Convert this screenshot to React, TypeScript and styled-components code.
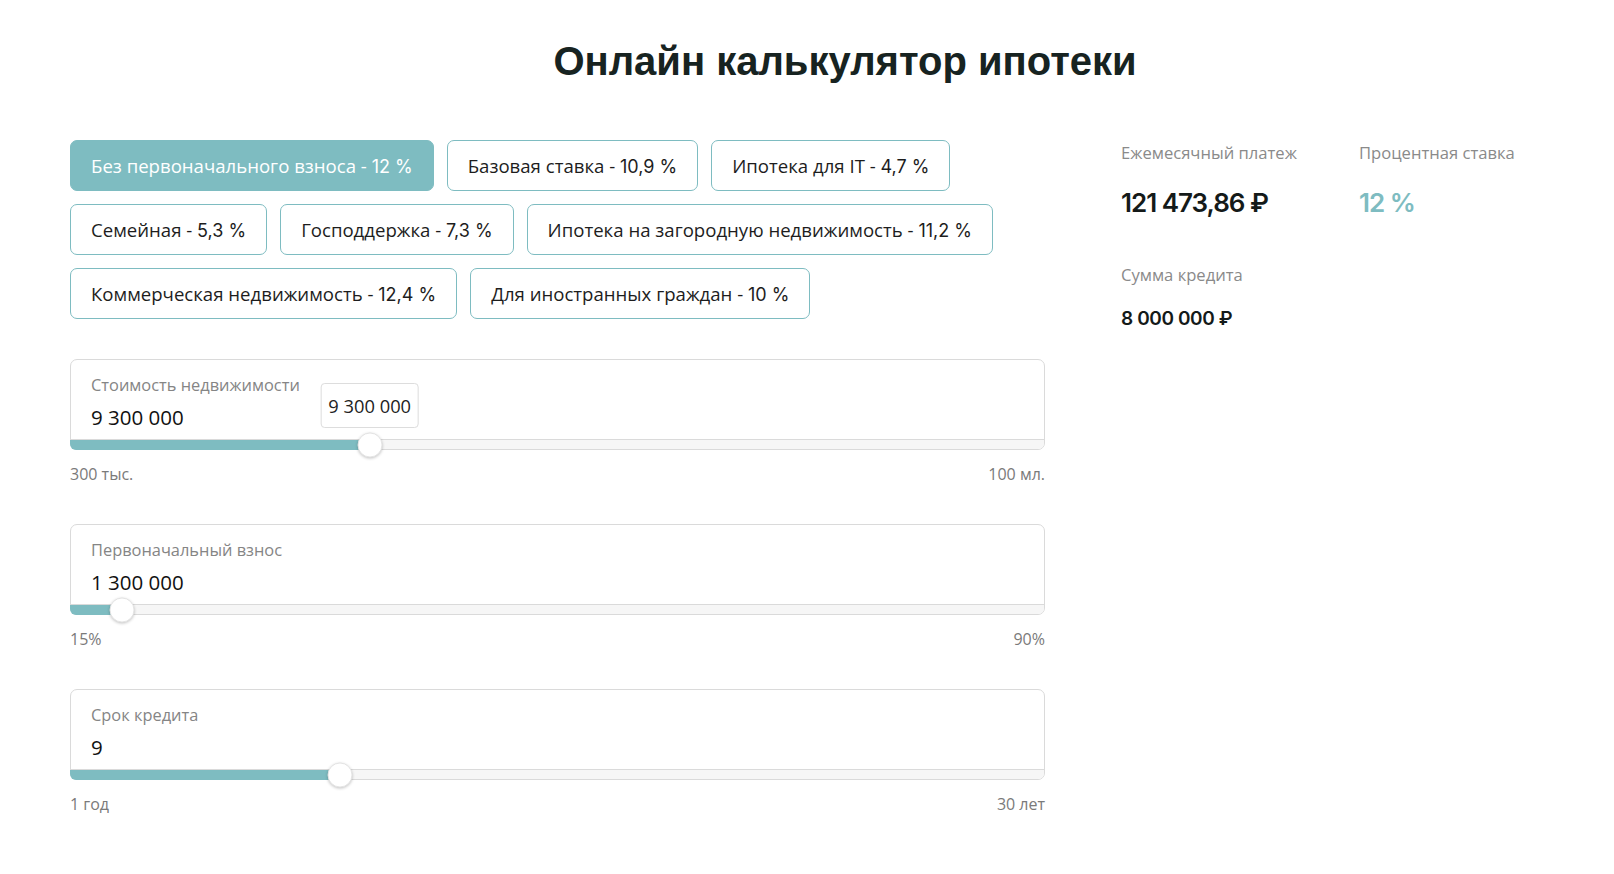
import React from "react";
import styled, { createGlobalStyle } from "styled-components";

const TEAL = "#7ebcc1";

const GlobalStyle = createGlobalStyle`
  html, body { margin: 0; padding: 0; background: #ffffff; }
  body { font-family: "Open Sans", "Noto Sans", sans-serif; color: #1b1b1b; }
  * { box-sizing: border-box; }
`;

const Page = styled.div`
  width: 1614px;
  height: 874px;
  padding: 41px 0 0 70px;
  overflow: hidden;
`;

const Title = styled.h1`
  margin: 0 0 59px;
  padding-left: 6px;
  text-align: center;
  font: 700 40px/1 "Liberation Sans", Arial, sans-serif;
  color: #172321;
`;

const Main = styled.div`
  display: flex;
  align-items: flex-start;
  gap: 76px;
`;

const LeftColumn = styled.div`
  width: 975px;
  display: flex;
  flex-direction: column;
`;

const Programs = styled.div`
  display: flex;
  flex-wrap: wrap;
  gap: 13px 13px;
`;

const ProgramButton = styled.button<{ $active?: boolean }>`
  height: 51px;
  padding: 0 20px;
  border: 1px solid ${TEAL};
  border-radius: 7px;
  background: ${(p) => (p.$active ? TEAL : "#ffffff")};
  color: ${(p) => (p.$active ? "#ffffff" : "#1d1d1d")};
  font-family: "Open Sans", "Noto Sans", sans-serif;
  font-size: 18.6px;
  cursor: pointer;
  white-space: nowrap;
`;

const Rate = styled.span`
  font-family: Inter, "Open Sans", sans-serif;
  font-size: 18px;
`;

const Sliders = styled.div`
  margin-top: 40px;
  display: flex;
  flex-direction: column;
  gap: 39px;
`;

const SliderBlock = styled.div`
  display: flex;
  flex-direction: column;
`;

const Card = styled.div`
  position: relative;
  height: 91px;
  border: 1px solid #dadada;
  border-radius: 7px;
  display: flex;
  flex-direction: column;
`;

const CardBody = styled.div`
  padding: 14px 20px 0;
  flex: 1;
`;

const FieldLabel = styled.div`
  font-size: 16.4px;
  line-height: 22px;
  color: #858585;
`;

const FieldValue = styled.div`
  margin-top: 7px;
  font-size: 20.5px;
  line-height: 28px;
  color: #111111;
`;

const Track = styled.div`
  position: relative;
  height: 10px;
  border-top: 1px solid #dadada;
  background: #f6f6f6;
  border-radius: 0 0 6px 6px;
`;

const Fill = styled.div`
  position: absolute;
  left: -1px;
  top: 0;
  bottom: -1px;
  background: ${TEAL};
  border-radius: 0 0 0 6px;
`;

const Thumb = styled.div`
  position: absolute;
  top: 50%;
  width: 25px;
  height: 25px;
  border-radius: 50%;
  background: #ffffff;
  border: 1px solid #e4e4e4;
  box-shadow: 0 1px 3px rgba(0, 0, 0, 0.22);
  transform: translate(-50%, -50%);
`;

const Tooltip = styled.div`
  position: absolute;
  bottom: calc(100% + 12px);
  height: 45px;
  padding: 0 7px;
  border: 1px solid #dddddd;
  border-radius: 4px;
  background: #ffffff;
  font-size: 18.3px;
  line-height: 43px;
  color: #222222;
  white-space: nowrap;
  transform: translateX(-50%);
`;

const RangeRow = styled.div`
  margin-top: 13px;
  display: flex;
  justify-content: space-between;
  font-size: 16px;
  line-height: 22px;
  color: #7a7a7a;
`;

const Summary = styled.div`
  padding-top: 2px;
  display: grid;
  grid-template-columns: 238px 238px;
  row-gap: 44px;
`;

const Stat = styled.div`
  display: flex;
  flex-direction: column;
`;

const StatLabel = styled.div`
  font-size: 16.6px;
  line-height: 22px;
  color: #8a8a8a;
  white-space: nowrap;
`;

const StatValue = styled.div<{ $accent?: boolean; $small?: boolean }>`
  margin-top: ${(p) => (p.$small ? "20px" : "22px")};
  font-family: Inter, "Open Sans", sans-serif;
  font-weight: 600;
  font-size: ${(p) => (p.$small ? "19px" : "26px")};
  letter-spacing: ${(p) => (p.$small ? "-0.4px" : "-1px")};
  line-height: ${(p) => (p.$small ? "26px" : "34px")};
  color: ${(p) => (p.$accent ? TEAL : "#141a19")};
  white-space: nowrap;
`;

const programs = [
  { name: "Без первоначального взноса", rate: "12 %", active: true },
  { name: "Базовая ставка", rate: "10,9 %" },
  { name: "Ипотека для IT", rate: "4,7 %" },
  { name: "Семейная", rate: "5,3 %" },
  { name: "Господдержка", rate: "7,3 %" },
  { name: "Ипотека на загородную недвижимость", rate: "11,2 %" },
  { name: "Коммерческая недвижимость", rate: "12,4 %" },
  { name: "Для иностранных граждан", rate: "10 %" },
];

const sliders = [
  { label: "Стоимость недвижимости", value: "9 300 000", pct: 30.7, min: "300 тыс.", max: "100 мл.", tooltip: true },
  { label: "Первоначальный взнос", value: "1 300 000", pct: 5.2, min: "15%", max: "90%" },
  { label: "Срок кредита", value: "9", pct: 27.6, min: "1 год", max: "30 лет" },
];

export default function App() {
  return (
    <Page>
      <GlobalStyle />
      <Title>Онлайн калькулятор ипотеки</Title>
      <Main>
        <LeftColumn>
          <Programs>
            {programs.map((p) => (
              <ProgramButton key={p.name} $active={p.active}>
                {p.name} - <Rate>{p.rate}</Rate>
              </ProgramButton>
            ))}
          </Programs>
          <Sliders>
            {sliders.map((s) => (
              <SliderBlock key={s.label}>
                <Card>
                  <CardBody>
                    <FieldLabel>{s.label}</FieldLabel>
                    <FieldValue>{s.value}</FieldValue>
                  </CardBody>
                  <Track>
                    <Fill style={{ width: `${s.pct}%` }} />
                    {s.tooltip && <Tooltip style={{ left: `${s.pct}%` }}>{s.value}</Tooltip>}
                    <Thumb style={{ left: `${s.pct}%` }} />
                  </Track>
                </Card>
                <RangeRow>
                  <span>{s.min}</span>
                  <span>{s.max}</span>
                </RangeRow>
              </SliderBlock>
            ))}
          </Sliders>
        </LeftColumn>
        <Summary>
          <Stat>
            <StatLabel>Ежемесячный платеж</StatLabel>
            <StatValue>121 473,86 ₽</StatValue>
          </Stat>
          <Stat>
            <StatLabel>Процентная ставка</StatLabel>
            <StatValue $accent>12 %</StatValue>
          </Stat>
          <Stat>
            <StatLabel>Сумма кредита</StatLabel>
            <StatValue $small>8 000 000 ₽</StatValue>
          </Stat>
        </Summary>
      </Main>
    </Page>
  );
}
